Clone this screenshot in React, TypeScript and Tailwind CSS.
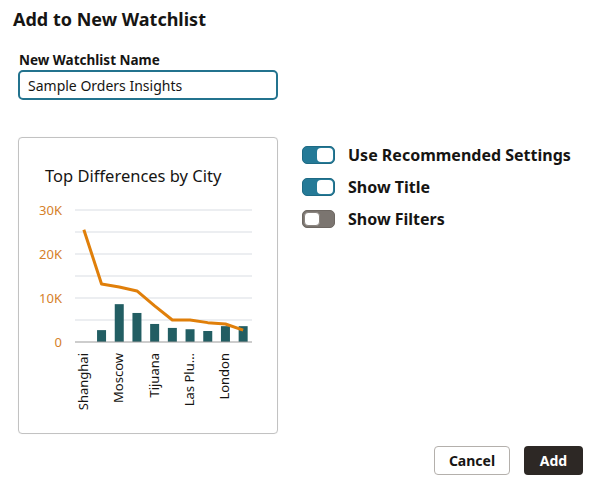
import React from "react";

const bars = [0, 2.7, 8.6, 6.6, 4.1, 3.2, 2.9, 2.5, 3.6, 3.6];
const line = [25.5, 13.2, 12.5, 11.6, 8.2, 5.0, 5.0, 4.4, 4.1, 2.7];
const labels: [number, string][] = [
  [0, "Shanghai"],
  [2, "Moscow"],
  [4, "Tijuana"],
  [6, "Las Plu\u2026"],
  [8, "London"],
];

const X0 = 56;
const STEP = 17.7;
const BASE = 152;
const SCALE = 4.4;
const cx = (i: number) => X0 + STEP * (i + 0.5);
const vy = (v: number) => BASE - v * SCALE;

function Chart() {
  const grid = [20, 42, 64, 86, 108, 130];
  const ticks: [number, string][] = [
    [20, "30K"],
    [64, "20K"],
    [108, "10K"],
    [152, "0"],
  ];
  return (
    <svg width="258" height="243" viewBox="0 0 258 243" className="block">
      {grid.map((y) => (
        <line key={y} x1={X0} x2={233} y1={y} y2={y} stroke="#e6e9ec" strokeWidth="1.5" />
      ))}
      {ticks.map(([y, t]) => (
        <text
          key={t}
          x={43}
          y={y}
          textAnchor="end"
          dominantBaseline="central"
          fill="#d5812a"
          fontSize="13"
          fontFamily="'Noto Sans', sans-serif"
        >
          {t}
        </text>
      ))}
      {bars.map((v, i) =>
        v > 0 ? (
          <rect key={i} x={cx(i) - 4.5} y={vy(v)} width={9} height={v * SCALE} fill="#225e63" />
        ) : null
      )}
      <line x1={X0} x2={233} y1={BASE} y2={BASE} stroke="#9b9b9b" strokeWidth="1.2" />
      <polyline
        points={line.map((v, i) => `${cx(i)},${vy(v)}`).join(" ")}
        fill="none"
        stroke="#e07f0a"
        strokeWidth="3"
        strokeLinejoin="round"
      />
      {labels.map(([i, t]) => (
        <text
          key={t}
          transform={`translate(${cx(i) - 1},${163}) rotate(-90)`}
          textAnchor="end"
          dominantBaseline="central"
          fill="#161513"
          fontSize="13"
          fontFamily="'Noto Sans', sans-serif"
        >
          {t}
        </text>
      ))}
    </svg>
  );
}

function Toggle({ on }: { on: boolean }) {
  return on ? (
    <div className="w-[33px] h-[18px] rounded-[5px] bg-[#257a97] border border-[#1e6a84] flex items-center justify-end pr-[1px]">
      <div className="w-[16px] h-[14px] rounded-[4px] bg-white" />
    </div>
  ) : (
    <div className="w-[33px] h-[18px] rounded-[5px] bg-[#7b7570] border border-[#6d6762] flex items-center justify-start pl-[1px]">
      <div className="w-[16px] h-[14px] rounded-[4px] bg-white border border-[#8a847f]" />
    </div>
  );
}

export default function App() {
  return (
    <div
      className="w-[600px] h-[483px] bg-white text-[#161513] flex flex-col"
      style={{ fontFamily: "'Noto Sans', 'Open Sans', sans-serif" }}
    >
      <h1 className="pl-[13px] pt-[6px] text-[18px] leading-[26px] font-bold">Add to New Watchlist</h1>
      <div className="pl-[19px] mt-[20px] text-[13.5px] leading-[16px] font-bold">New Watchlist Name</div>
      <div className="ml-[18px] mt-[2px] w-[260px] h-[30px] rounded-[5px] border-2 border-[#23738e] flex items-center pl-[8px] text-[14px]">
        Sample Orders Insights
      </div>
      <div className="flex mt-[37px] ml-[18px]">
        <div className="w-[260px] h-[297px] rounded-[4px] border border-[#c2c2c2] shadow-[0_0_1px_rgba(0,0,0,0.1)]">
          <div className="pl-[26px] pt-[24px] text-[16.5px] leading-[28px]">Top Differences by City</div>
          <Chart />
        </div>
        <div className="ml-[24px] mt-[9px] flex flex-col gap-[14px]">
          {[
            [true, "Use Recommended Settings"],
            [true, "Show Title"],
            [false, "Show Filters"],
          ].map(([on, t]) => (
            <div key={t as string} className="flex items-center h-[18px]">
              <Toggle on={on as boolean} />
              <span className="ml-[13px] text-[16px] font-bold leading-[18px]">{t as string}</span>
            </div>
          ))}
        </div>
      </div>
      <div className="flex justify-end gap-[14px] pr-[17px] mt-[12px]">
        <button className="w-[76px] h-[29px] rounded-[4px] border border-[#b4b0ac] bg-white text-[14px] font-bold">
          Cancel
        </button>
        <button className="w-[59px] h-[29px] rounded-[4px] bg-[#2d2825] text-white text-[14px] font-bold">
          Add
        </button>
      </div>
    </div>
  );
}
